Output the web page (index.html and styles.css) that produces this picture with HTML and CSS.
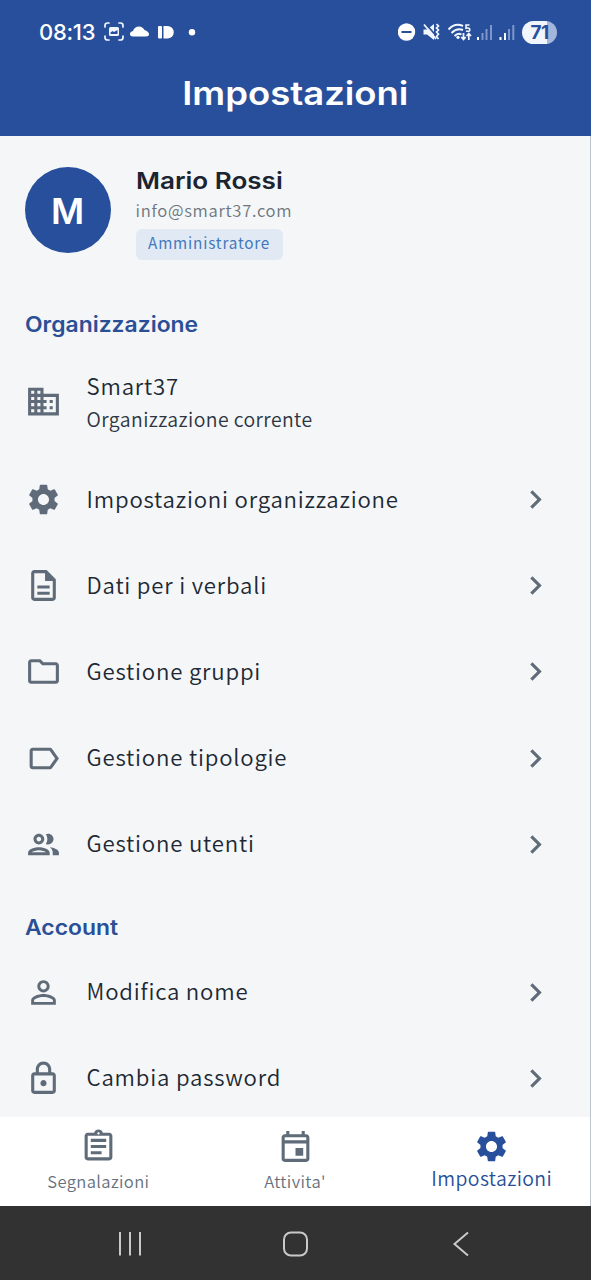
FILE: index.html
```html
<!DOCTYPE html>
<html lang="it">
<head>
<meta charset="utf-8">
<title>Impostazioni</title>
<link rel="stylesheet" href="styles.css">
</head>
<body>
<svg width="0" height="0" class="defs">
  <symbol id="chevron" viewBox="0 0 24 24"><path d="M10 6 8.59 7.41 13.17 12l-4.58 4.59L10 18l6-6z"/></symbol>
  <symbol id="gear" viewBox="0 0 24 24"><path d="M19.14 12.94c.04-.3.06-.61.06-.94 0-.32-.02-.64-.07-.94l2.03-1.58c.18-.14.23-.41.12-.61l-1.92-3.32c-.12-.22-.37-.29-.59-.22l-2.39.96c-.5-.38-1.03-.7-1.62-.94l-.36-2.54c-.04-.24-.24-.41-.48-.41h-3.84c-.24 0-.43.17-.47.41l-.36 2.54c-.59.24-1.13.57-1.62.94l-2.39-.96c-.22-.08-.47 0-.59.22L2.74 8.87c-.12.21-.08.47.12.61l2.03 1.58c-.05.3-.09.63-.09.94s.02.64.07.94l-2.03 1.58c-.18.14-.23.41-.12.61l1.92 3.32c.12.22.37.29.59.22l2.39-.96c.5.38 1.03.7 1.62.94l.36 2.54c.05.24.24.41.48.41h3.84c.24 0 .44-.17.47-.41l.36-2.54c.59-.24 1.13-.56 1.62-.94l2.39.96c.22.08.47 0 .59-.22l1.92-3.32c.12-.22.07-.47-.12-.61zM12 15.6c-1.98 0-3.6-1.62-3.6-3.6s1.62-3.6 3.6-3.6 3.6 1.62 3.6 3.6-1.62 3.6-3.6 3.6z"/></symbol>
</svg>
<div class="screen">
  <header class="top">
    <div class="status">
      <span class="clock">08:13</span>
      <svg class="status-left" width="96" height="22" viewBox="0 0 96 22">
        <g fill="none" stroke="#f2f7ff" stroke-width="1.7" stroke-linecap="round"><path d="M1 6V4.500Q1 2 3.500 2H5M15 2h1.500Q19 2 19 4.500V6M19 15v1.500Q19 19 16.500 19H15M5 19H3.500Q1 19 1 16.500V15"/></g>
        <rect x="5" y="6" width="10" height="9" rx="1.500" fill="#f2f7ff"/><path d="M6.500 13v-1.500l2-1.500 1.500 1 3.500-2v4z" fill="#284f9b"/>
        <path d="M29 15.500q-3 0-3-2.500 0-2.500 3-3 1.500-4.500 6-4.500 3.500 0 5.500 3.500 4 1.500 4.500 4 0 2.500-3 2.500z" fill="#fff"/>
        <rect x="54" y="5" width="4" height="12.500" rx="1" fill="#fff"/><path d="M59.500 5h4a6.250 6.250 0 0 1 0 12.500h-4z" fill="#fff"/>
        <circle cx="88" cy="11.300" r="3.200" fill="#fff"/>
      </svg>
      <svg class="status-right" width="118" height="26" viewBox="0 0 118 26">
        <circle cx="8.500" cy="13" r="8.700" fill="#fff"/><path d="M3.500 13h10" stroke="#284f9b" stroke-width="2"/>
        <g fill="none" stroke="#f2f7ff" stroke-width="1.700"><path d="M25.500 10.500h3.500l7-5.500v16l-7-5.500h-3.500z" fill="#f2f7ff" stroke="none"/><path d="M27.500 4.500l13 15" stroke="#284f9b" stroke-width="1.800"/><path d="M26 5.500l12 14.500" stroke-width="1.800"/><path d="M38.500 5l2 2-2 2 2 2-2 2 2 2-2 2.500 2 2.500" stroke-width="1.700"/>
        <path d="M50.500 10.500Q57 3.500 65 7M53.500 14Q59 8.500 65 11M56.500 17Q60 13.500 63.500 15.500" stroke-width="2"/><path d="M71.500 6h-3.500v3.200q3.800-.8 3.800 1.500t-3.800 1.300" stroke-width="1.600"/><path d="M65.500 14v6.500M63.300 18l2.200 2.500 2.200-2.500M70.800 21v-6.500M68.600 17l2.200-2.500 2.200 2.500"/></g>
        <circle cx="60" cy="18.300" r="1.600" fill="#fff"/>
        <g fill="#fff"><rect x="79" y="18" width="2" height="3"/><rect x="101.500" y="18" width="2" height="3"/><rect x="106" y="14" width="2" height="7"/></g>
        <g fill="#7e96c8"><rect x="83.500" y="14" width="2" height="7"/><rect x="87.500" y="10" width="2" height="11"/><rect x="92" y="6" width="2" height="15"/><rect x="110" y="10" width="2" height="11"/><rect x="114.300" y="6" width="2" height="15"/></g>
      </svg>
      <span class="battery">71</span>
    </div>
    <h1 class="title"><span class="wide">Impostazioni</span></h1>
  </header>
  <main class="content">
    <section class="profile">
      <div class="avatar">M</div>
      <div class="who">
        <div class="name"><span class="wide">Mario Rossi</span></div>
        <div class="mail">info@smart37.com</div>
        <div class="badge">Amministratore</div>
      </div>
    </section>
    <h2 class="heading heading-org"><span class="wide">Organizzazione</span></h2>
    <div class="row row-tall">
      <svg class="icon" viewBox="0 0 24 24"><path d="M12 7V3H2v18h20V7H12zM6 19H4v-2h2v2zm0-4H4v-2h2v2zm0-4H4V9h2v2zm0-4H4V5h2v2zm4 12H8v-2h2v2zm0-4H8v-2h2v2zm0-4H8V9h2v2zm0-4H8V5h2v2zm10 12h-8v-2h2v-2h-2v-2h2v-2h-2V9h8v10zm-2-8h-2v2h2v-2zm0 4h-2v2h2v-2z"/></svg>
      <div class="texts"><span class="label">Smart37</span><span class="sub">Organizzazione corrente</span></div>
    </div>
    <div class="row"><svg class="icon"><use href="#gear"/></svg><span class="label">Impostazioni organizzazione</span><svg class="icon go"><use href="#chevron"/></svg></div>
    <div class="row"><svg class="icon" viewBox="0 0 24 24"><path d="M8 16h8v2H8zm0-4h8v2H8zm6-10H6c-1.100 0-2 .9-2 2v16c0 1.100.89 2 1.990 2H18c1.100 0 2-.9 2-2V8l-6-6zm4 18H6V4h7v5h5v11z"/></svg><span class="label">Dati per i verbali</span><svg class="icon go"><use href="#chevron"/></svg></div>
    <div class="row"><svg class="icon" viewBox="0 0 24 24"><path d="M9.170 6l2 2H20v10H4V6h5.170M10 4H4c-1.100 0-1.990.9-1.990 2L2 18c0 1.100.9 2 2 2h16c1.100 0 2-.9 2-2V8c0-1.100-.9-2-2-2h-8l-2-2z"/></svg><span class="label">Gestione gruppi</span><svg class="icon go"><use href="#chevron"/></svg></div>
    <div class="row"><svg class="icon" viewBox="0 0 24 24"><path d="M17.630 5.840C17.270 5.330 16.670 5 16 5L5 5.010C3.900 5.010 3 5.900 3 7v10c0 1.100.9 1.990 2 1.990L16 19c.67 0 1.270-.33 1.630-.84L22 12l-4.370-6.160zM16 17H5V7h11l3.550 5L16 17z"/></svg><span class="label">Gestione tipologie</span><svg class="icon go"><use href="#chevron"/></svg></div>
    <div class="row"><svg class="icon" viewBox="0 0 24 24"><path d="M9 13.750c-2.340 0-7 1.170-7 3.500V19h14v-1.750c0-2.330-4.660-3.500-7-3.500zM4.340 17c.84-.58 2.870-1.250 4.660-1.250s3.820.67 4.660 1.250H4.340zM9 12c1.930 0 3.500-1.570 3.500-3.500S10.930 5 9 5 5.500 6.570 5.500 8.500 7.070 12 9 12zm0-5c.83 0 1.500.67 1.500 1.500S9.830 10 9 10s-1.500-.67-1.500-1.500S8.170 7 9 7zm7.040 6.810c1.160.84 1.960 1.960 1.960 3.440V19h4v-1.750c0-2.020-3.500-3.170-5.960-3.440zM15 12c1.930 0 3.500-1.570 3.500-3.500S16.930 5 15 5c-.54 0-1.040.13-1.500.35.63.89 1 1.980 1 3.150s-.37 2.260-1 3.150c.46.22.96.35 1.500.35z"/></svg><span class="label">Gestione utenti</span><svg class="icon go"><use href="#chevron"/></svg></div>
    <h2 class="heading heading-acc"><span class="wide">Account</span></h2>
    <div class="row"><svg class="icon" viewBox="0 0 24 24"><path d="M12 5.900c1.160 0 2.100.94 2.100 2.100s-.94 2.100-2.100 2.100S9.900 9.160 9.900 8s.94-2.100 2.100-2.100m0 9c2.970 0 6.100 1.460 6.100 2.100v1.100H5.900V17c0-.64 3.130-2.100 6.100-2.100M12 4C9.790 4 8 5.790 8 8s1.790 4 4 4 4-1.790 4-4-1.790-4-4-4zm0 9c-2.670 0-8 1.340-8 4v3h16v-3c0-2.660-5.330-4-8-4z"/></svg><span class="label">Modifica nome</span><svg class="icon go"><use href="#chevron"/></svg></div>
    <div class="row"><svg class="icon" viewBox="0 0 24 24"><path d="M18 8h-1V6c0-2.760-2.240-5-5-5S7 3.240 7 6v2H6c-1.100 0-2 .9-2 2v10c0 1.100.9 2 2 2h12c1.100 0 2-.9 2-2V10c0-1.100-.9-2-2-2zM9 6c0-1.660 1.340-3 3-3s3 1.340 3 3v2H9V6zm9 14H6V10h12v10zm-6-3c1.100 0 2-.9 2-2s-.9-2-2-2-2 .9-2 2 .9 2 2 2z"/></svg><span class="label">Cambia password</span><svg class="icon go"><use href="#chevron"/></svg></div>
  </main>
  <nav class="tabs">
    <div class="tab"><svg class="icon" viewBox="0 0 24 24"><path d="M7 15h7v2H7zm0-4h10v2H7zm0-4h10v2H7zm12-4h-4.180C14.400 1.840 13.300 1 12 1s-2.400.84-2.820 2H5c-1.100 0-2 .9-2 2v14c0 1.100.9 2 2 2h14c1.100 0 2-.9 2-2V5c0-1.100-.9-2-2-2zm-7-.25c.41 0 .75.34.75.75s-.34.75-.75.75-.75-.34-.75-.75.340-.75.750-.75zM19 19H5V5h14v14z"/></svg><span class="tab-label">Segnalazioni</span></div>
    <div class="tab"><svg class="icon" viewBox="0 0 24 24"><path d="M19 4h-1V2h-2v2H8V2H6v2H5c-1.110 0-1.990.9-1.990 2L3 20c0 1.100.89 2 2 2h14c1.100 0 2-.9 2-2V6c0-1.100-.9-2-2-2zm0 16H5V10h14v10zm0-12H5V6h14v2zm-7 5h5v5h-5z"/></svg><span class="tab-label">Attivita'</span></div>
    <div class="tab active"><svg class="icon"><use href="#gear"/></svg><span class="tab-label">Impostazioni</span></div>
  </nav>
  <footer class="system">
    <svg width="591" height="74" viewBox="0 0 591 74" fill="none" stroke="#c9c9c9" stroke-width="2"><path d="M120 26v23.500M130 26v23.500M140 26v23.500M468 26.500 454.500 38 468 49.500"/><rect x="284" y="26.500" width="23" height="23" rx="7"/></svg>
  </footer>
</div>
</body>
</html>
```
FILE: styles.css
```css
* { box-sizing: border-box; }
body { margin: 0; font-family: "Noto Sans CJK JP", "Noto Sans", sans-serif; font-weight: 350; color: #202833; }
.defs { display: block; position: absolute; }
.screen { width: 591px; height: 1280px; display: flex; flex-direction: column; overflow: hidden; background: #f4f6f8; }
.top { height: 136px; flex: none; background: #284f9b; color: #fff; }
.status { height: 64px; padding-left: 39px; display: flex; align-items: center; }
.clock { width: 65px; font: 500 22px/30px Inter, sans-serif; letter-spacing: -.3px; }
.status-left { margin-right: 198px; }
.status-right { flex: none; }
.battery { width: 35px; height: 23px; margin-left: 6px; border-radius: 12px; background: linear-gradient(90deg, #f1f5fc 71%, #a5b6dc 71%); color: #284f9b; font: 700 19px/23px Inter, sans-serif; letter-spacing: -.5px; text-align: center; }
.wide { display: inline-block; transform: scaleX(1.09); transform-origin: 0 50%; }
.title { margin: 0; font: 600 33px/58px Inter, sans-serif; text-align: center; }
.title .wide { transform: scaleX(1.105); transform-origin: 50% 50%; }
.content { height: 981px; flex: none; overflow: hidden; border-right: 1px solid #bfc5cc; padding: 31px 36px 0 24.600px; }
.profile { height: 127px; display: flex; gap: 25px; align-items: flex-start; }
.avatar { width: 86px; height: 86px; border-radius: 50%; background: #284f9b; color: #fff; font: 600 36px/88px Inter, sans-serif; text-align: center; }
.name { height: 29px; font: 600 23px/28px Inter, sans-serif; color: #1c2430; white-space: nowrap; }
.name .wide { transform: scaleX(1.132); }
.mail { height: 33px; font-size: 16.600px; line-height: 28px; letter-spacing: .7px; color: #6c757d; }
.badge { width: 147px; height: 31px; border-radius: 6px; background: #e1eaf4; color: #4478bd; font-size: 15.300px; font-weight: 400; line-height: 27px; letter-spacing: .8px; text-align: center; }
.heading { margin: 0; color: #2b4f96; font: 600 21px/30px Inter, sans-serif; }
.heading-org { height: 51.500px; padding-top: 16px; }
.heading-acc { height: 61.500px; padding-top: 26px; }
.row { height: 86.200px; display: flex; align-items: center; }
.row-tall { height: 111px; }
.icon { width: 37px; height: 37px; flex: none; fill: #5f6b78; }
.label { margin-left: 25px; padding-bottom: 4px; font-size: 22.200px; line-height: 32px; letter-spacing: .79px; white-space: nowrap; }
.texts { display: flex; flex-direction: column; }
.texts .label { padding-bottom: 3px; }
.sub { margin-left: 25px; font-size: 19.400px; line-height: 30px; letter-spacing: .42px; color: #2d3540; }
.go { margin-left: auto; }
.tabs { height: 89px; flex: none; display: flex; background: #fff; border-right: 1px solid #bfc5cc; }
.tab { flex: 1; display: flex; flex-direction: column; align-items: center; padding-top: 11px; color: #66717d; }
.tab-label { font-size: 16.600px; line-height: 30px; letter-spacing: .35px; margin-top: 1px; }
.active { color: #284f9b; }
.active .icon { fill: #284f9b; }
.active .tab-label { font-size: 19.400px; letter-spacing: .4px; margin-top: -2px; }
.system { height: 74px; flex: none; background: #323232; }
.system svg { display: block; }
```
